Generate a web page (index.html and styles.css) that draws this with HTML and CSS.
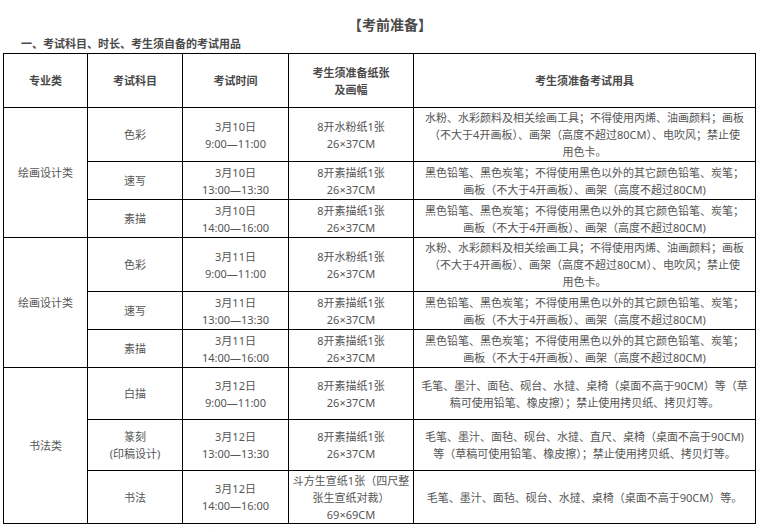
FILE: index.html
```html
<!DOCTYPE html>
<html lang="zh-CN">
<head>
<meta charset="utf-8">
<title>考前准备</title>
<link rel="stylesheet" href="styles.css">
</head>
<body>
<div class="page">
  <h1 class="title">【考前准备】</h1>
  <h2 class="subtitle">一、考试科目、时长、考生须自备的考试用品</h2>
  <table class="exam">
    <colgroup>
      <col class="c1"><col class="c2"><col class="c3"><col class="c4"><col class="c5">
    </colgroup>
    <thead>
      <tr class="h54">
        <th>专业类</th>
        <th>考试科目</th>
        <th>考试时间</th>
        <th>考生须准备纸张<br>及画幅</th>
        <th>考生须准备考试用具</th>
      </tr>
    </thead>
    <tbody>
      <tr class="h54">
        <td rowspan="3">绘画设计类</td>
        <td>色彩</td>
        <td>3月10日<br>9:00—11:00</td>
        <td>8开水粉纸1张<br>26×37CM</td>
        <td class="desc">水粉、水彩颜料及相关绘画工具；不得使用丙烯、油画颜料；画板<br>（不大于4开画板）、画架（高度不超过80CM）、电吹风；禁止使<br>用色卡。</td>
      </tr>
      <tr class="h38">
        <td>速写</td>
        <td>3月10日<br>13:00—13:30</td>
        <td>8开素描纸1张<br>26×37CM</td>
        <td class="desc">黑色铅笔、黑色炭笔；不得使用黑色以外的其它颜色铅笔、炭笔；<br>画板（不大于4开画板）、画架（高度不超过80CM)</td>
      </tr>
      <tr class="h38">
        <td>素描</td>
        <td>3月10日<br>14:00—16:00</td>
        <td>8开素描纸1张<br>26×37CM</td>
        <td class="desc">黑色铅笔、黑色炭笔；不得使用黑色以外的其它颜色铅笔、炭笔；<br>画板（不大于4开画板）、画架（高度不超过80CM)</td>
      </tr>
      <tr class="h54">
        <td rowspan="3">绘画设计类</td>
        <td>色彩</td>
        <td>3月11日<br>9:00—11:00</td>
        <td>8开水粉纸1张<br>26×37CM</td>
        <td class="desc">水粉、水彩颜料及相关绘画工具；不得使用丙烯、油画颜料；画板<br>（不大于4开画板）、画架（高度不超过80CM）、电吹风；禁止使<br>用色卡。</td>
      </tr>
      <tr class="h38">
        <td>速写</td>
        <td>3月11日<br>13:00—13:30</td>
        <td>8开素描纸1张<br>26×37CM</td>
        <td class="desc">黑色铅笔、黑色炭笔；不得使用黑色以外的其它颜色铅笔、炭笔；<br>画板（不大于4开画板）、画架（高度不超过80CM)</td>
      </tr>
      <tr class="h38">
        <td>素描</td>
        <td>3月11日<br>14:00—16:00</td>
        <td>8开素描纸1张<br>26×37CM</td>
        <td class="desc">黑色铅笔、黑色炭笔；不得使用黑色以外的其它颜色铅笔、炭笔；<br>画板（不大于4开画板）、画架（高度不超过80CM)</td>
      </tr>
      <tr class="h52">
        <td rowspan="3">书法类</td>
        <td>白描</td>
        <td>3月12日<br>9:00—11:00</td>
        <td>8开素描纸1张<br>26×37CM</td>
        <td class="desc">毛笔、墨汁、面毡、砚台、水撻、桌椅（桌面不高于90CM）等（草<br>稿可使用铅笔、橡皮擦）；禁止使用拷贝纸、拷贝灯等。</td>
      </tr>
      <tr class="h51">
        <td>篆刻<br>(印稿设计)</td>
        <td>3月12日<br>13:00—13:30</td>
        <td>8开素描纸1张<br>26×37CM</td>
        <td class="desc">毛笔、墨汁、面毡、砚台、水撻、直尺、桌椅（桌面不高于90CM)<br>等（草稿可使用铅笔、橡皮擦）；禁止使用拷贝纸、拷贝灯等。</td>
      </tr>
      <tr class="h53">
        <td>书法</td>
        <td>3月12日<br>14:00—16:00</td>
        <td class="tight">斗方生宣纸1张（四尺整张生宣纸对裁）<br>69×69CM</td>
        <td class="desc">毛笔、墨汁、面毡、砚台、水撻、桌椅（桌面不高于90CM）等。</td>
      </tr>
    </tbody>
  </table>
  <p class="note">注：1.绘画设计类考试须在规定时间内完成，考试用具由考生自备，考场内不得借用他人考试用具。</p>
</div>
</body>
</html>
```

FILE: styles.css
```css
html, body {
  margin: 0;
  padding: 0;
  background: #ffffff;
}

body {
  font-family: "Noto Sans", "Noto Sans CJK SC", sans-serif;
  color: #555555;
  font-size: 11px;
  line-height: 17px;
}

.page {
  padding: 15px 0 0 3px;
  width: 754px;
}

.title {
  margin: 0;
  padding-left: 20px;
  font-size: 14px;
  line-height: 20px;
  font-weight: bold;
  text-align: center;
  color: #4a4a4a;
}

.subtitle {
  margin: 0;
  padding-left: 18px;
  font-size: 11px;
  line-height: 17px;
  font-weight: bold;
  color: #4a4a4a;
}

.exam {
  border-collapse: collapse;
  table-layout: fixed;
  width: 753px;
  margin-top: 1px;
}

.exam .c1 { width: 84px; }
.exam .c2 { width: 95px; }
.exam .c3 { width: 106px; }
.exam .c4 { width: 125px; }
.exam .c5 { width: 342px; }

.exam th,
.exam td {
  border: 1px solid #000000;
  padding: 0 3px;
  text-align: center;
  vertical-align: middle;
  font-size: 11px;
  line-height: 17px;
}

.exam th {
  font-weight: bold;
  color: #4a4a4a;
}

.exam td.tight {
  padding: 0 1px;
}

.exam td.desc {
  padding: 0 1px;
  white-space: nowrap;
}

.h54 { height: 54px; }
.h53 { height: 53px; }
.h52 { height: 52px; }
.h51 { height: 51px; }
.h38 { height: 38px; }

.note {
  margin: 0;
  padding-left: 19px;
  padding-top: 2px;
  font-size: 11px;
  line-height: 17px;
  white-space: nowrap;
}
```
